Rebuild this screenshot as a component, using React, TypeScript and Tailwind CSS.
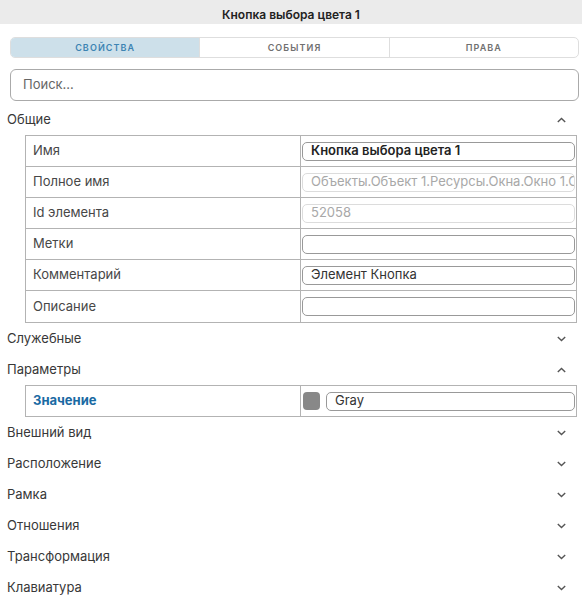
import React from "react";

const Chevron = ({ up }: { up?: boolean }) => (
  <svg width="9" height="6" viewBox="0 0 9 6" className="block">
    {up ? (
      <polyline points="0.8,5 4.5,1.5 8.2,5" fill="none" stroke="#555" strokeWidth="1.4" />
    ) : (
      <polyline points="0.8,1 4.5,4.5 8.2,1" fill="none" stroke="#555" strokeWidth="1.4" />
    )}
  </svg>
);

const SectionHeader = ({ title, up }: { title: string; up?: boolean }) => (
  <div className="h-[31px] flex items-center justify-between pl-[7px] pr-[16px] text-[13px] text-[#383838]">
    <span>{title}</span>
    <Chevron up={up} />
  </div>
);

type Row = { label: string; value: string; kind: "bold" | "disabled" | "normal" };

const rows: Row[] = [
  { label: "Имя", value: "Кнопка выбора цвета 1", kind: "bold" },
  { label: "Полное имя", value: "Объекты.Объект 1.Ресурсы.Окна.Окно 1.Схема.Кнопка выбора цвета 1", kind: "disabled" },
  { label: "Id элемента", value: "52058", kind: "disabled" },
  { label: "Метки", value: "", kind: "normal" },
  { label: "Комментарий", value: "Элемент Кнопка", kind: "normal" },
  { label: "Описание", value: "", kind: "normal" },
];

const Input = ({ value, kind }: { value: string; kind: Row["kind"] }) => (
  <div
    className={
      "h-[19px] flex-1 min-w-0 flex items-center pl-[8px] pr-[3px] rounded-[5px] border text-[13px] whitespace-nowrap overflow-hidden " +
      (kind === "disabled"
        ? "border-[#dcdcdc] text-[#a8a8a8]"
        : kind === "bold"
        ? "border-[#999] text-[#222] font-semibold"
        : "border-[#999] text-[#333]")
    }
  >
    {value}
  </div>
);

export default function App() {
  return (
    <div
      className="w-[582px] h-[602px] overflow-hidden bg-white"
      style={{ fontFamily: "Inter, 'Noto Sans', sans-serif" }}
    >
      <div className="h-[24px] pt-[6px] flex items-center justify-center bg-[#ebebeb] text-[12px] font-semibold text-[#222]">
        Кнопка выбора цвета 1
      </div>

      <div className="ml-[10px] mr-[3px] mt-[13px] h-[21px] flex border border-[#dedede] rounded-[5px] overflow-hidden text-[9px] font-semibold tracking-[0.12em]">
        <div className="flex-1 flex items-center justify-center bg-[#cde0ea] text-[#3d84b3]">СВОЙСТВА</div>
        <div className="flex-1 flex items-center justify-center border-l border-[#dedede] text-[#707070]">СОБЫТИЯ</div>
        <div className="flex-1 flex items-center justify-center border-l border-[#dedede] text-[#707070]">ПРАВА</div>
      </div>

      <div className="ml-[10px] mr-[3px] mt-[11px] h-[32px] flex items-center px-[12px] border border-[#aaa] rounded-[6px] text-[13px] text-[#666]">
        Поиск...
      </div>

      <div className="mt-[3px]">
        <SectionHeader title="Общие" up />
        <div className="ml-[25px] mr-[5px] border border-[#b3b3b3]">
          {rows.map((r, i) => (
            <div
              key={r.label}
              className={"h-[31px] flex " + (i < rows.length - 1 ? "border-b border-[#b3b3b3]" : "")}
            >
              <div className="w-[275px] shrink-0 flex items-center pl-[7px] border-r border-[#b3b3b3] text-[13px] text-[#474747]">
                {r.label}
              </div>
              <div className="flex-1 min-w-0 flex items-center px-[1px]">
                <Input value={r.value} kind={r.kind} />
              </div>
            </div>
          ))}
        </div>
        <SectionHeader title="Служебные" />
        <SectionHeader title="Параметры" up />
        <div className="ml-[25px] mr-[5px] border border-[#b3b3b3]">
          <div className="h-[30px] flex">
            <div className="w-[275px] shrink-0 flex items-center pl-[7px] border-r border-[#b3b3b3] text-[13px] font-bold text-[#1a6aa3]">
              Значение
            </div>
            <div className="flex-1 min-w-0 flex items-center pl-[2px] pr-[1px] gap-[6px]">
              <div className="w-[17px] h-[18px] rounded-[4px] bg-[#888] shrink-0" />
              <Input value="Gray" kind="normal" />
            </div>
          </div>
        </div>
        <SectionHeader title="Внешний вид" />
        <SectionHeader title="Расположение" />
        <SectionHeader title="Рамка" />
        <SectionHeader title="Отношения" />
        <SectionHeader title="Трансформация" />
        <SectionHeader title="Клавиатура" />
      </div>
    </div>
  );
}
